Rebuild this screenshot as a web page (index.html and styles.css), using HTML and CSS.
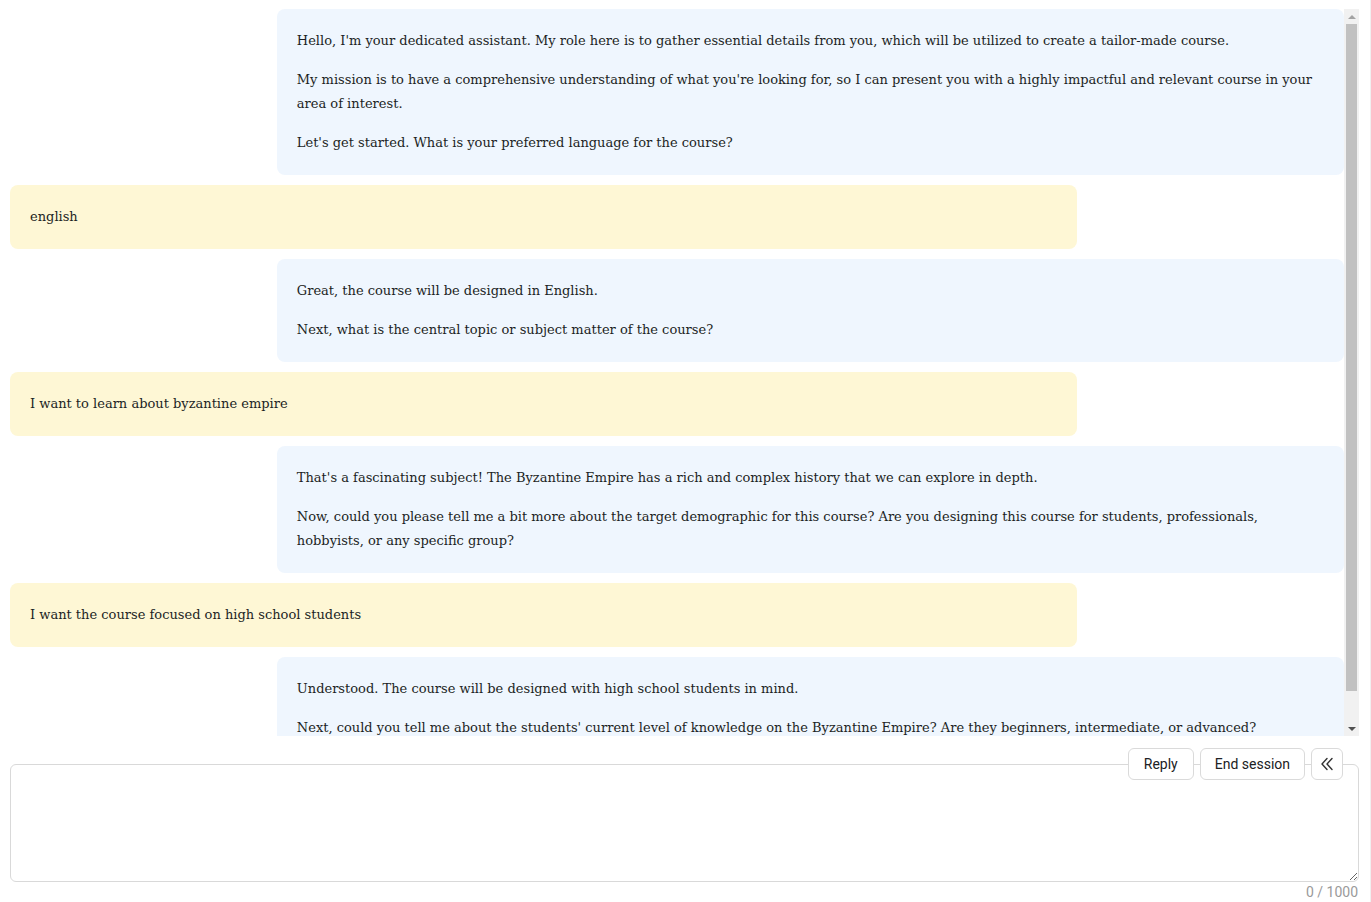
FILE: index.html
```html
<!DOCTYPE html>
<html lang="en">
<head>
<meta charset="utf-8">
<title>Course assistant</title>
<link rel="stylesheet" href="styles.css">
</head>
<body>
<div class="page">
  <div class="chat-wrap">
    <div class="chat">
      <div class="msg bot">
        <p>Hello, I'm your dedicated assistant. My role here is to gather essential details from you, which will be utilized to create a tailor-made course.</p>
        <p>My mission is to have a comprehensive understanding of what you're looking for, so I can present you with a highly impactful and relevant course in your area of interest.</p>
        <p>Let's get started. What is your preferred language for the course?</p>
      </div>
      <div class="msg user"><p>english</p></div>
      <div class="msg bot">
        <p>Great, the course will be designed in English.</p>
        <p>Next, what is the central topic or subject matter of the course?</p>
      </div>
      <div class="msg user"><p>I want to learn about byzantine empire</p></div>
      <div class="msg bot">
        <p>That's a fascinating subject! The Byzantine Empire has a rich and complex history that we can explore in depth.</p>
        <p>Now, could you please tell me a bit more about the target demographic for this course? Are you designing this course for students, professionals, hobbyists, or any specific group?</p>
      </div>
      <div class="msg user"><p>I want the course focused on high school students</p></div>
      <div class="msg bot">
        <p>Understood. The course will be designed with high school students in mind.</p>
        <p>Next, could you tell me about the students' current level of knowledge on the Byzantine Empire? Are they beginners, intermediate, or advanced?</p>
      </div>
    </div>
    <div class="scrollbar" aria-hidden="true">
      <div class="arrow up"></div>
      <div class="track"><div class="thumb"></div></div>
      <div class="arrow down"></div>
    </div>
  </div>
  <div class="composer">
    <textarea class="input" maxlength="1000" aria-label="Message"></textarea>
    <div class="actions">
      <button class="btn">Reply</button>
      <button class="btn wide">End session</button>
      <button class="btn icon" aria-label="Collapse">
        <svg width="16" height="16" viewBox="0 0 16 16" fill="none" stroke="#333" stroke-width="1.4" stroke-linecap="round" stroke-linejoin="round"><path d="M8 2.5 3 8l5 5.5"/><path d="M13 2.5 8 8l5 5.5"/></svg>
      </button>
    </div>
    <div class="counter">0 / 1000</div>
  </div>
</div>
</body>
</html>
```
FILE: styles.css
```css
html, body {
  margin: 0;
  padding: 0;
  background: #fff;
}
body {
  font-family: "DejaVu Serif", "Liberation Serif", serif;
  color: #1c1f24;
}
.page {
  padding: 9px 11px 0 10px;
  border-right: 1px solid #f0f0f0;
  height: 902px;
  box-sizing: border-box;
}
.chat-wrap {
  display: flex;
  height: 727px;
}
.chat {
  flex: 1;
  min-width: 0;
  overflow: hidden;
  display: flex;
  flex-direction: column;
  gap: 10px;
}
.scrollbar {
  width: 15px;
  flex-shrink: 0;
  background: #f1f1f1;
  display: flex;
  flex-direction: column;
}
.arrow {
  height: 15px;
  display: flex;
  align-items: center;
  justify-content: center;
}
.arrow::before {
  content: "";
  border-left: 4px solid transparent;
  border-right: 4px solid transparent;
}
.arrow.up::before {
  border-bottom: 4px solid #a3a3a3;
}
.arrow.down::before {
  border-top: 4px solid #505050;
}
.track {
  flex: 1;
  padding: 0 2px;
}
.thumb {
  height: 667px;
  background: #c1c1c1;
}
.msg {
  width: 80%;
  box-sizing: border-box;
  padding: 20px 20px;
  border-radius: 8px;
  font-size: 13px;
  line-height: 24px;
  flex-shrink: 0;
}
.msg p {
  margin: 0;
}
.msg p + p {
  margin-top: 15px;
}
.bot {
  align-self: flex-end;
  background: #eff6fe;
}
.user {
  align-self: flex-start;
  background: #fef7d5;
}
.composer {
  position: relative;
  margin-top: 28px;
}
.input {
  display: block;
  width: 100%;
  height: 118px;
  box-sizing: border-box;
  border: 1px solid #d9d9d9;
  border-radius: 6px;
  padding: 12px;
  font-family: "Roboto", sans-serif;
  font-size: 14px;
  resize: vertical;
  outline: none;
}
.actions {
  position: absolute;
  top: -16px;
  right: 16px;
  display: flex;
  gap: 6px;
}
.btn {
  height: 32px;
  padding: 0 15px;
  background: #fff;
  border: 1px solid #dadada;
  border-radius: 6px;
  font-family: "Roboto", "Open Sans", sans-serif;
  font-size: 14px;
  color: #202124;
  cursor: pointer;
}
.btn.wide {
  padding: 0 14px;
}
.btn.icon {
  width: 32px;
  padding: 0;
  display: flex;
  align-items: center;
  justify-content: center;
}
.counter {
  text-align: right;
  padding-right: 1px;
  margin-top: 2px;
  font-family: "Roboto", sans-serif;
  font-size: 14px;
  color: #9a9a9a;
}
```
